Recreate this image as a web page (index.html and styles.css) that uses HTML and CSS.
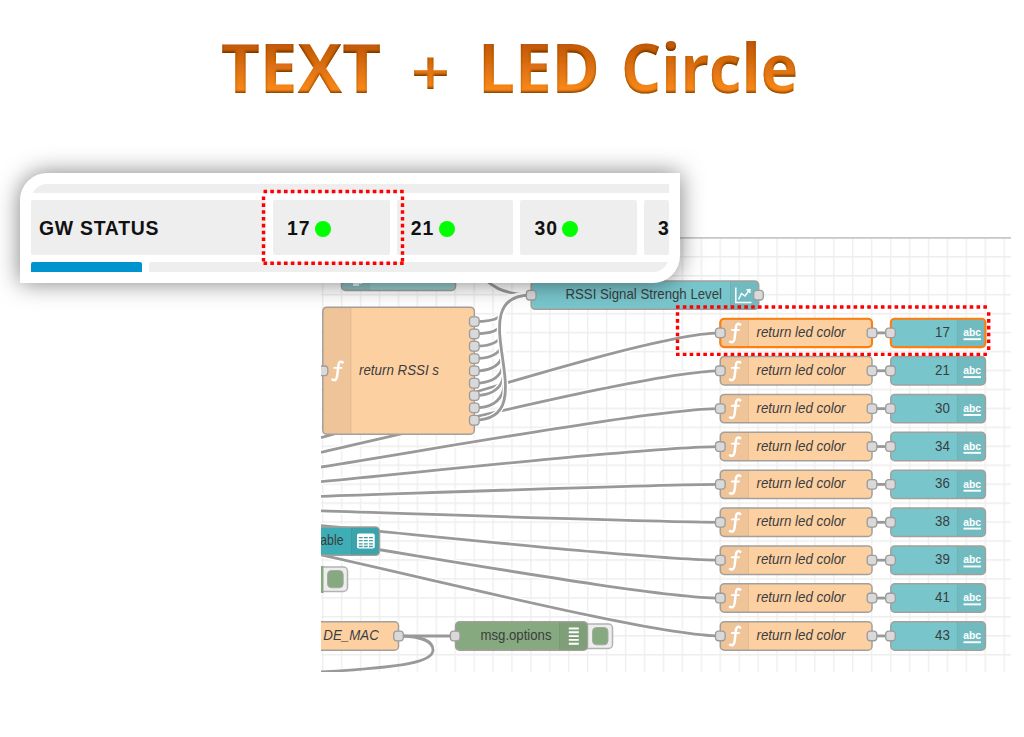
FILE: index.html
```html
<!DOCTYPE html>
<html lang="en">
<head>
<meta charset="utf-8">
<title>TEXT + LED Circle</title>
<link rel="stylesheet" href="styles.css">
</head>
<body>
<main class="slide">
  <h1 class="title">
    <svg class="title-art" viewBox="0 0 1024 150" role="img" aria-label="TEXT + LED Circle">
      <defs>
        <linearGradient id="orange" gradientUnits="userSpaceOnUse" x1="0" y1="42" x2="0" y2="94">
          <stop offset="0" stop-color="#be560a"/><stop offset="1" stop-color="#ff8c1c"/>
        </linearGradient>
        <filter id="bevel" x="-2%" y="-10%" width="104%" height="120%">
          <feOffset in="SourceAlpha" dy="-2" result="up"/>
          <feGaussianBlur in="up" stdDeviation="1.2" result="soft"/>
          <feComposite in="SourceAlpha" in2="soft" operator="out" result="edge"/>
          <feFlood flood-color="#3d1800" flood-opacity=".8"/>
          <feComposite in2="edge" operator="in" result="shade"/>
          <feMerge><feMergeNode in="SourceGraphic"/><feMergeNode in="shade"/></feMerge>
        </filter>
      </defs>
      <g class="title-text" filter="url(#bevel)" fill="url(#orange)">
        <text x="221" y="92.5" textLength="160" lengthAdjust="spacingAndGlyphs">TEXT</text>
        <text x="411" y="95.5" textLength="39" lengthAdjust="spacingAndGlyphs" class="plus">+</text>
        <text x="478" y="92.5" textLength="122" lengthAdjust="spacingAndGlyphs">LED</text>
        <text x="621" y="92.5" textLength="177" lengthAdjust="spacingAndGlyphs">Circle</text>
      </g>
    </svg>
  </h1>

  <svg class="flow" viewBox="321 237 690 435">
    <defs>
      <pattern id="grid" patternUnits="userSpaceOnUse" x="719.5" y="635" width="18.93" height="18.95">
        <path d="M.75 0V19M0 .75H19" stroke="#eee" stroke-width="1.3"/>
      </pattern>
      <rect id="port" class="port" x="-4.8" y="-4.8" width="9.6" height="9.6" rx="2.8"/>
      <g id="fn">
        <path d="M5.200 -8.400C2.700 -10 1.300 -8.600 .9 -5.500L-.4 5.500C-.9 9 -2.600 10 -5 8.800" stroke-width="2.500"/>
        <path d="M-3.200 -2.900H4" stroke-width="1.900"/>
      </g>
      <g id="row">
        <path class="wire" d="M872 0H890"/>
        <rect class="node peach" x="720.3" y="-14.2" width="151.7" height="28.4" rx="4"/>
        <rect class="shade" x="721" y="-13.5" width="27.5" height="27"/>
        <path class="divider" d="M748.5 -13.5V13.5"/>
        <use class="fn" href="#fn" x="735"/>
        <text class="label italic" x="756.5" y="4" textLength="89" lengthAdjust="spacingAndGlyphs">return led color</text>
        <rect class="node teal" x="890.8" y="-14.2" width="94.6" height="28.4" rx="4"/>
        <path class="shade" d="M957.3 -13.5H982q2.7 0 2.7 2.7V10.800q0 2.700-2.700 2.700H957.300z"/>
        <path class="divider" d="M957.3 -13.5V13.5"/>
        <text class="abc" x="963.3" y="3.200" textLength="17.800" lengthAdjust="spacingAndGlyphs">abc</text>
        <path d="M963.500 6.300H981" stroke="#fff" stroke-width="1.900"/>
      </g>
      <g id="row-ports"><use href="#port" x="720.3"/><use href="#port" x="872"/><use href="#port" x="890.500"/></g>
    </defs>
    <rect x="321" y="237" width="690" height="435" fill="#fff"/>
    <rect x="321" y="237" width="690" height="435" fill="url(#grid)"/>
    <path d="M321 237.900H1011" stroke="#c8c8c8" stroke-width="1.600"/>
    <g id="wires"></g>
    <path class="wire" d="M398 636H455"/>
    <path class="wire" d="M398 636C425 636 433 643 433 650C433 662 405 667 321 672"/>

    <rect class="node mint" x="341.500" y="262" width="114" height="28.400" rx="4"/>
    <path class="shade" d="M342 262H370V290H346q-4 0-4-4z"/>
    <path d="M353 279H362V284H359V286H353z" fill="#fff" opacity=".8"/>

    <rect class="node peach" x="322.800" y="307.200" width="151.500" height="127" rx="4"/>
    <rect class="shade" x="323.500" y="308" width="27.500" height="125.500"/>
    <path class="divider" d="M351 308V433.500"/>
    <use class="fn" href="#fn" x="337.500" y="370.800"/>
    <text class="label italic" x="359" y="374.700" textLength="80" lengthAdjust="spacingAndGlyphs">return RSSI s</text>
    <use href="#port" x="323" y="370.800"/>
    <g id="outputs"></g>

    <rect class="node teal" x="531.200" y="281" width="227.500" height="28.300" rx="4"/>
    <path class="shade" d="M730.500 281.500H755q3 0 3 3V306q0 3-3 3H730.500z"/>
    <path class="divider" d="M730.500 281.500V309"/>
    <text class="label" x="565.500" y="299" textLength="156.500" lengthAdjust="spacingAndGlyphs">RSSI Signal Strengh Level</text>
    <path d="M735.800 287.500V302.500H751.500M738.500 299.500L741.500 293.500L745 296L749.500 289.800M746.500 290L749.800 289.500L749.800 293" fill="none" stroke="#fff" stroke-width="1.500"/>
    <use href="#port" x="531.200" y="295.200"/><use href="#port" x="758.500" y="295.200"/>

    <rect class="node cyan" x="290" y="527" width="89.500" height="28.300" rx="4"/>
    <path class="shade" d="M351.500 527.500H376q3 0 3 3V552q0 3-3 3H351.500z"/>
    <path class="divider" d="M351.500 527.500V555"/>
    <text class="label" x="320.300" y="545.200" textLength="23.200" lengthAdjust="spacingAndGlyphs">able</text>
    <rect x="357" y="533.500" width="17.700" height="15" rx="1.800" fill="#fff"/>
    <path d="M358.800 537.600H373M358.800 540.700H373M358.800 543.800H373M358.800 546.500H373" stroke="#3a9fa9" stroke-width="1.300" stroke-dasharray="3.900 1.200"/>

    <rect class="button" x="310" y="567" width="37.500" height="24.500" rx="4"/>
    <path d="M322 566V593" stroke="#87a980" stroke-width="3"/>
    <rect class="switch" x="327.500" y="570.500" width="15.700" height="17.300" rx="4"/>

    <rect class="node peach" x="290" y="621.800" width="108.500" height="28.400" rx="4"/>
    <text class="label italic" x="323.300" y="639.900" textLength="55.500" lengthAdjust="spacingAndGlyphs">DE_MAC</text>
    <use href="#port" x="398.500" y="636"/>

    <rect class="button" x="580" y="624" width="32.500" height="24.500" rx="4"/>
    <rect class="switch" x="592.500" y="627.500" width="15.500" height="17.300" rx="4"/>
    <rect class="node green" x="455.500" y="621.800" width="132" height="28.400" rx="4"/>
    <path class="shade" d="M559.500 622.500H584q3 0 3 3V647q0 3-3 3H559.500z"/>
    <path class="divider" d="M559.500 622.500V649.500"/>
    <path d="M568.800 628.500H578.800M568.800 632.300H578.800M568.800 636.100H578.800M568.800 639.900H578.800M568.800 643.700H578.800" stroke="#fff" stroke-width="1.900"/>
    <text class="label" x="480.500" y="639.900" textLength="71" lengthAdjust="spacingAndGlyphs">msg.options</text>
    <use href="#port" x="455.200" y="636"/>

    <g id="rows"></g>
    <g class="marker">
      <path d="M676 307H990M676 354.400H990"/>
      <path d="M677.500 312.200V352M988.700 312.200V352"/>
    </g>
  </svg>

  <section class="card">
    <div class="status">
      <div class="strip"></div>
      <div class="cells">
        <div class="cell name">GW STATUS</div>
        <div class="cell">17<i class="led"></i></div>
        <div class="cell">21<i class="led"></i></div>
        <div class="cell">30<i class="led"></i></div>
        <div class="cell">3</div>
      </div>
      <div class="tabs"><div class="tab active"></div><div class="tab rest"></div></div>
    </div>
    <svg class="marker card-marker" viewBox="0 0 144 76">
      <path d="M2.500 3.500H143M2.500 75.300H143" transform="translate(0 -1)"/>
      <path d="M2.500 7.500V73M141.500 7.500V73"/>
    </svg>
  </section>
</main>
<script src="flow.js"></script>
</body>
</html>
```

FILE: styles.css
```css
body { margin: 0; background: #fff; font-family: "Liberation Sans", Arial, sans-serif; }
.slide { position: relative; width: 1024px; height: 737px; overflow: hidden; }
.title { margin: 0; height: 150px; }
.title-art { display: block; width: 1024px; height: 150px; }
.title-text { font: 700 67.5px "Open Sans", "Noto Sans", sans-serif; }
.plus { font-weight: 600; font-size: 66px; }

.flow { display: block; width: 690px; height: 435px; margin: 87px 0 0 321px; }
.wire { fill: none; stroke: #999; stroke-width: 2.8; }
.halo { fill: none; stroke: #fff; stroke-width: 5.5; }
.node { stroke: #a3a09b; stroke-width: 1.5; }
.peach { fill: #fdd0a2; }
.teal { fill: #78c6cc; }
.mint { fill: #95cbcd; }
.cyan { fill: #3fadb5; }
.green { fill: #87a980; }
.shade { fill: #000; fill-opacity: .055; }
.divider { stroke: #000; stroke-opacity: .07; stroke-width: 1; fill: none; }
.port { fill: #d9d9d9; stroke: #9c9c9c; stroke-width: 1.3; }
.fn { fill: none; stroke: #fff; stroke-linecap: round; }
.label { font-size: 14.2px; fill: #3a3d3e; }
.italic { font-style: italic; }
.abc { font-size: 11.5px; font-weight: 700; fill: #fff; }
.button { fill: #eee; stroke: #b3b3b3; stroke-width: 1.5; }
.switch { fill: #87a980; stroke: #a5aaa2; stroke-width: 1; }
.selected .outline { fill: none; stroke: #ff7f0e; stroke-width: 2.1; }
.marker { fill: none; stroke: #f00; stroke-width: 3.4; stroke-dasharray: 3.6 3.23; }

.card {
  position: absolute; left: 20px; top: 173px; width: 638px; height: 88px; padding: 11px;
  background: #fff; border-radius: 27px 0 27px 0; box-shadow: 0 0 23px rgba(0, 0, 0, .5);
}
.status {
  display: flex; flex-direction: column; gap: 7px; height: 88px; overflow: hidden;
  border-radius: 16px 0 16px 0; background: #fff;
}
.strip { height: 9px; flex: none; background: #eee; }
.cells { display: flex; gap: 7px; height: 55px; flex: none; }
.cell {
  flex: none; box-sizing: border-box; width: 116.700px; height: 55px; padding: 2px 0 0 14px;
  display: flex; align-items: center; background: #eee; border-radius: 2px;
  font-size: 19.4px; font-weight: 700; letter-spacing: 1px; color: #111;
}
.cell.name { width: 235px; padding-left: 8px; letter-spacing: .75px; }
.cell:last-child { width: 25px; }
.led { width: 16px; height: 16px; margin-left: 4.5px; border-radius: 50%; background: #0f0; }
.tabs { display: flex; gap: 7px; height: 10px; }
.tab { background: #eee; border-radius: 2px 2px 0 0; }
.tab.active { width: 111px; background: #0094ce; }
.tab.rest { flex: 1; }
.card-marker { position: absolute; left: 241px; top: 16px; width: 144px; height: 76px; }
```

FILE: flow.js
```js
const labels = [17, 21, 30, 34, 36, 38, 39, 41, 43];
const rowY = i => 332.9 + i * 37.88;

// Each wire has a white casing so crossings stay readable.
const wire = d => `<path class="halo" d="${d}"/><path class="wire" d="${d}"/>`;

let wires = "";
labels.forEach((_, i) => {
  const from = 437.7 + i * 14.65, to = rowY(i);
  wires += wire(`M321 ${from}C454 ${from + (to - from) * 0.366} 660 ${to} 720 ${to}`);
});
wires += wire("M470 262C490 290 505 294 531 295");
let outputs = "";
for (let i = 0; i < 9; i++) {
  const y = 321.6 + i * 12.33, bend = 55 + i * 2.5;
  wires += wire(`M474 ${y}C${474 + bend} ${y} ${531 - bend} 295 531 295`);
  outputs += `<use href="#port" x="474.300" y="${y}"/>`;
}
document.getElementById("wires").innerHTML = wires;
document.getElementById("outputs").innerHTML = outputs;

document.getElementById("rows").innerHTML = labels.map((label, i) => `
  <g transform="translate(0 ${rowY(i)})" class="${i ? "" : "selected"}">
    <use href="#row"/>
    ${i ? "" : '<rect class="outline" x="720.3" y="-14.200" width="151.700" height="28.400" rx="4"/><rect class="outline" x="890.800" y="-14.200" width="94.600" height="28.400" rx="4"/>'}
    <text class="label" x="935" y="4" textLength="14.800" lengthAdjust="spacingAndGlyphs">${label}</text>
    <use href="#row-ports"/>
  </g>`).join("");
```
